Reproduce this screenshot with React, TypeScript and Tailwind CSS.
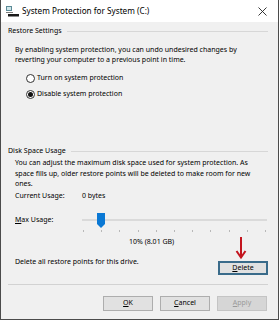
import React from "react";

function Radio({ checked, label }: { checked?: boolean; label: string }) {
  return (
    <div className="flex items-center h-[12px] pl-[18px]">
      <div className="w-[9px] h-[9px] rounded-full border border-[#333] bg-white flex items-center justify-center">
        {checked && <div className="w-[5px] h-[5px] rounded-full bg-[#111]" />}
      </div>
      <span className="ml-[2px] leading-[12px]">{label}</span>
    </div>
  );
}

function Header({ label }: { label: string }) {
  return (
    <div className="flex items-center h-[12px]">
      <span className="leading-[12px] whitespace-nowrap">{label}</span>
      <div className="flex-1 h-px bg-[#d7d7d7] ml-[5px]" />
    </div>
  );
}

export default function App() {
  const ticks = Array.from({ length: 11 });
  return (
    <div className="w-[279px] h-[320px] flex flex-col bg-[#f0f0f0] border-x border-b border-[#4b4b4b] text-black overflow-hidden font-['Noto_Sans',sans-serif] text-[7px]">
      {/* Title bar */}
      <div className="h-[22px] bg-white flex items-center shrink-0">
        <svg width="13" height="11" viewBox="0 0 13 11" className="ml-[5px]">
          <rect x="0.5" y="0.5" width="5" height="4" fill="#cfe6ea" stroke="#5a8a96" strokeWidth="1" />
          <rect x="0" y="6" width="7" height="1" fill="#7a7a7a" />
          <rect x="2" y="8" width="11" height="2.5" fill="#1a1a1a" />
        </svg>
        <span className="ml-[3px] text-[8.2px] leading-[12px]">System Protection for System (C:)</span>
        <div className="flex-1" />
        <svg width="9" height="9" viewBox="0 0 9 9" className="mr-[11px]">
          <path d="M0.5 0.5 L8.5 8.5 M8.5 0.5 L0.5 8.5" stroke="#222" strokeWidth="0.9" />
        </svg>
      </div>

      {/* Body */}
      <div className="flex flex-col pl-[7px] pr-[10px]">
        <div className="mt-[3px]">
          <Header label="Restore Settings" />
        </div>
        <div className="mt-[8px] pl-[7px] leading-[10px]">
          <div>By enabling system protection, you can undo undesired changes by</div>
          <div>reverting your computer to a previous point in time.</div>
        </div>
        <div className="mt-[7px]">
          <Radio label="Turn on system protection" />
        </div>
        <div className="mt-[4px]">
          <Radio checked label="Disable system protection" />
        </div>

        <div className="mt-[45px]">
          <Header label="Disk Space Usage" />
        </div>
        <div className="mt-[1px] pl-[7px] leading-[10.5px]">
          <div>You can adjust the maximum disk space used for system protection. As</div>
          <div>space fills up, older restore points will be deleted to make room for new</div>
          <div>ones.</div>
        </div>
        <div className="mt-[1px] pl-[7px] flex h-[12px] items-center">
          <span className="w-[67px]">Current Usage:</span>
          <span>0 bytes</span>
        </div>
        <div className="mt-[9px] pl-[7px] flex h-[24px]">
          <span className="w-[67px] leading-[16px]">
            <span className="underline">M</span>ax Usage:
          </span>
          <div className="relative w-[185px] h-[24px]">
            <div className="absolute left-0 right-0 top-[7px] h-[2px] bg-[#dadada]" />
            <svg width="8" height="15" viewBox="0 0 8 15" className="absolute left-[15px] top-[1px]">
              <path d="M0 0 H8 V11 L4 15 L0 11 Z" fill="#0a78d4" />
            </svg>
            <div className="absolute left-0 right-0 top-[18px] flex justify-between px-[1px]">
              {ticks.map((_, i) => (
                <div key={i} className="w-px h-[2px] bg-[#b8b8b8]" />
              ))}
            </div>
          </div>
        </div>
        <div className="h-[12px] leading-[12px] pl-[121px]">10% (8.01 GB)</div>

        <div className="mt-[8px] pl-[7px] flex items-start">
          <span className="leading-[12px]">Delete all restore points for this drive.</span>
          <div className="flex-1" />
          <div className="relative mt-[5px]">
            <svg width="12" height="23" viewBox="0 0 12 23" className="absolute left-[17px] top-[-24px]">
              <path d="M6 0 V20" stroke="#c3141e" strokeWidth="2" />
              <path d="M1.5 14 L6 20.5 L10.5 14" stroke="#c3141e" strokeWidth="2" fill="none" />
            </svg>
            <div className="w-[50px] h-[14px] border-[2px] border-[#3a6b8a] bg-[#e1e1e1] flex items-center justify-center leading-[10px]">
              <span>
                <span className="underline">D</span>elete
              </span>
            </div>
          </div>
        </div>

        <div className="mt-[9px] h-px bg-[#d2d2d2]" />

        <div className="mt-[11px] flex justify-end gap-[7px] pr-[1px]">
          <div className="w-[50px] h-[15px] border border-[#adadad] bg-[#e1e1e1] flex items-center justify-center">
            <span>
              <span className="underline">O</span>K
            </span>
          </div>
          <div className="w-[50px] h-[15px] border border-[#adadad] bg-[#e1e1e1] flex items-center justify-center">
            <span>
              <span className="underline">C</span>ancel
            </span>
          </div>
          <div className="w-[50px] h-[15px] border border-[#c4c4c4] bg-[#d6d6d6] flex items-center justify-center text-[#9a9a9a]">
            <span>
              <span className="underline">A</span>pply
            </span>
          </div>
        </div>
      </div>
    </div>
  );
}
